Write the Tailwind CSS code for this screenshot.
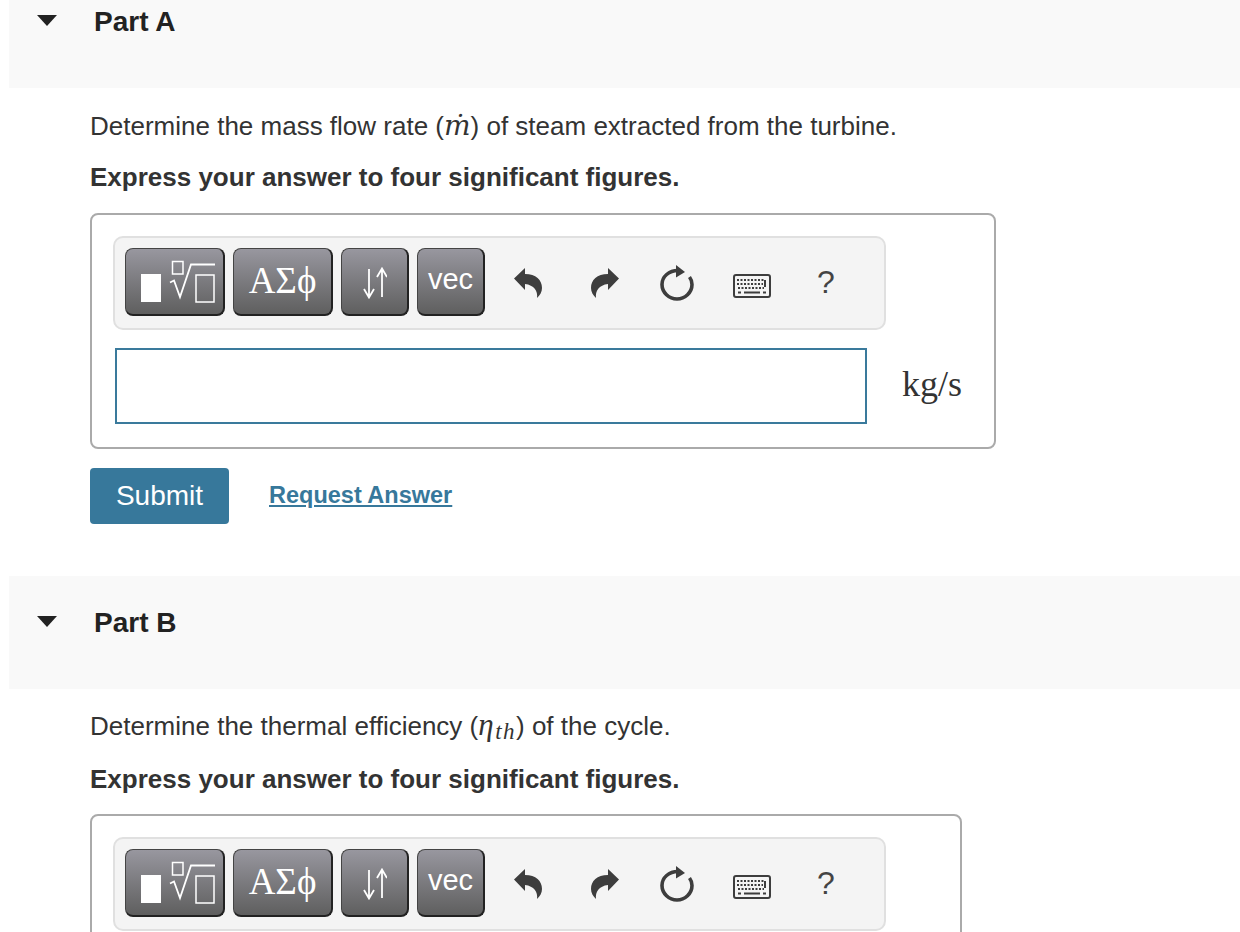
<!DOCTYPE html>
<html lang="en">
<head>
  <meta charset="UTF-8">
  <title>Part A and Part B</title>
  <script src="https://cdn.jsdelivr.net/npm/@tailwindcss/browser@4"></script>
</head>
<body class="bg-white text-[#333] font-['Liberation_Sans',Arial,sans-serif] h-[932px] overflow-hidden">
  <!-- shared icons -->
  <svg class="hidden">
    <symbol id="undo" viewBox="0 0 28 30">
      <path d="M0 10.500 L11 0 V6 C22 6 28 12 28 20 C28 24 26 27 23 30 C24 23 20 17 11 16 V22 Z" fill="#3d3d3d"/>
    </symbol>
    <symbol id="redo" viewBox="0 0 28 30">
      <path d="M28 10.500 L17 0 V6 C6 6 0 12 0 20 C0 24 2 27 5 30 C4 23 8 17 17 16 V22 Z" fill="#3d3d3d"/>
    </symbol>
    <symbol id="reload" viewBox="0 0 34 36">
      <path d="M18 5.500 C9 5.500 2 11.500 2 19.500 C2 27.500 9 34 17 34 C25 34 32 27.500 32 19.500 C32 16.500 31 14 29.500 12" fill="none" stroke="#3d3d3d" stroke-width="3.600"/>
      <path d="M16 0 L25 7 L16 12.500 Z" fill="#3d3d3d"/>
    </symbol>
    <symbol id="keyboard" viewBox="0 0 38 24">
      <rect x="1" y="1" width="36" height="22" rx="2" fill="#f4f4f4" stroke="#3d3d3d" stroke-width="2"/>
      <path d="M4 6 H32 M4 10 H30 M5 14 H31" stroke="#3d3d3d" stroke-width="2" stroke-dasharray="2 1.500"/>
      <path d="M32 6 V13" stroke="#3d3d3d" stroke-width="2"/>
      <path d="M5 18.500 H8 M11 18.500 H27 M30 18.500 H33" stroke="#3d3d3d" stroke-width="2"/>
    </symbol>
    <symbol id="template" viewBox="0 0 100 68">
      <rect x="16" y="26" width="20" height="28" fill="#fff"/>
      <rect x="47.500" y="13.500" width="10.500" height="12.500" fill="none" stroke="#fff" stroke-width="1.500"/>
      <path d="M45 34.500 L49 32.500 L55 49 L66 16.500 H90" fill="none" stroke="#fff" stroke-width="1.800"/>
      <rect x="71" y="27" width="18" height="27" fill="none" stroke="#fff" stroke-width="1.500"/>
    </symbol>
    <symbol id="arrows" viewBox="0 0 24 32">
      <path d="M6 2 V30 M1 22 L6 30.500 L11 22" fill="none" stroke="#fff" stroke-width="1.800"/>
      <path d="M19 30 V2 M14 10 L19 1.500 L24 10" fill="none" stroke="#fff" stroke-width="1.800"/>
    </symbol>
  </svg>

  <!-- Part A -->
  <section>
    <div class="ml-[9px] -mt-[25px] h-[113px] bg-[#f9f9f9] flex items-start pt-[29px]">
      <svg class="w-[20px] h-[11px] ml-[28px] mt-[11px]" viewBox="0 0 20 11"><path d="M0 0 H20 L10 11 Z" fill="#222"/></svg>
      <h2 class="ml-[37px] text-[28px] leading-[36px] font-bold text-[#222]">Part A</h2>
    </div>
    <div class="ml-[90px]">
      <p class="mt-[20px] text-[26px] leading-[36px]">Determine the mass flow rate (<span class="font-['DejaVu_Serif',serif] italic text-[28px] leading-none">ṁ</span>) of steam extracted from the turbine.</p>
      <p class="mt-[15px] text-[26px] leading-[36px] font-bold">Express your answer to four significant figures.</p>
      <div class="mt-[18px] w-[906px] h-[236px] border-2 border-[#aaa] rounded-lg pt-[21px] pl-[21px]">
        <div class="w-[773px] h-[94px] bg-[#f4f4f4] border-2 border-[#e0e0e0] rounded-[10px] flex items-center pl-[10px]">
          <div class="flex gap-2 -mt-[2px]">
            <button class="w-[100px] h-[68px] rounded-lg border border-[#444] border-b-2 border-r-2 border-b-[#222] border-r-[#222] bg-linear-to-b from-[#98979f] to-[#5f5f5f]"><svg class="w-[100px] h-[68px] -ml-px -mt-px"><use href="#template"/></svg></button>
            <button class="w-[100px] h-[68px] rounded-lg border border-[#444] border-b-2 border-r-2 border-b-[#222] border-r-[#222] bg-linear-to-b from-[#98979f] to-[#5f5f5f] text-white font-['Liberation_Serif',serif] text-[37px] pb-[2px]">ΑΣϕ</button>
            <button class="w-[68px] h-[68px] rounded-lg border border-[#444] border-b-2 border-r-2 border-b-[#222] border-r-[#222] bg-linear-to-b from-[#98979f] to-[#5f5f5f] flex items-center justify-center"><svg class="w-[24px] h-[32px] mt-[3px]"><use href="#arrows"/></svg></button>
            <button class="w-[68px] h-[68px] rounded-lg border border-[#444] border-b-2 border-r-2 border-b-[#222] border-r-[#222] bg-linear-to-b from-[#98979f] to-[#5f5f5f] text-white text-[29px] pb-[4px]">vec</button>
          </div>
          <svg class="w-[28px] h-[30px] ml-[29px]"><use href="#undo"/></svg>
          <svg class="w-[28px] h-[30px] ml-[49px]"><use href="#redo"/></svg>
          <svg class="w-[34px] h-[36px] ml-[41px]"><use href="#reload"/></svg>
          <svg class="w-[38px] h-[24px] ml-[39px] mt-[6px]"><use href="#keyboard"/></svg>
          <span class="ml-[46px] text-[32px] text-[#444] -mt-[2px]">?</span>
        </div>
        <div class="flex items-center mt-[18px] ml-[2px]">
          <div class="w-[752px] h-[76px] bg-white border-2 border-[#3a7a9c]"></div>
          <span class="ml-[35px] font-['Liberation_Serif',serif] text-[36px] leading-none -mt-[4px]">kg/s</span>
        </div>
      </div>
      <div class="flex items-center mt-[19px]">
        <button class="w-[139px] h-[56px] bg-[#37789b] rounded text-white text-[28px]">Submit</button>
        <a href="#" class="ml-[40px] text-[23.5px] font-bold text-[#37789b] underline">Request Answer</a>
      </div>
    </div>
  </section>

  <!-- Part B -->
  <section class="mt-[52px]">
    <div class="ml-[9px] h-[113px] bg-[#f9f9f9] flex items-start pt-[29px]">
      <svg class="w-[20px] h-[11px] ml-[28px] mt-[11px]" viewBox="0 0 20 11"><path d="M0 0 H20 L10 11 Z" fill="#222"/></svg>
      <h2 class="ml-[37px] text-[28px] leading-[36px] font-bold text-[#222]">Part B</h2>
    </div>
    <div class="ml-[90px]">
      <p class="mt-[19px] text-[26px] leading-[36px]">Determine the thermal efficiency (<span class="font-['Liberation_Serif',serif] italic text-[31px] leading-none tracking-[1.5px]">η<sub class="text-[23px] bottom-[-4px]">th</sub></span>) of the cycle.</p>
      <p class="mt-[17px] text-[26px] leading-[36px] font-bold">Express your answer to four significant figures.</p>
      <div class="mt-[17px] w-[872px] h-[236px] border-2 border-[#aaa] rounded-lg pt-[21px] pl-[21px]">
        <div class="w-[773px] h-[94px] bg-[#f4f4f4] border-2 border-[#e0e0e0] rounded-[10px] flex items-center pl-[10px]">
          <div class="flex gap-2 -mt-[2px]">
            <button class="w-[100px] h-[68px] rounded-lg border border-[#444] border-b-2 border-r-2 border-b-[#222] border-r-[#222] bg-linear-to-b from-[#98979f] to-[#5f5f5f]"><svg class="w-[100px] h-[68px] -ml-px -mt-px"><use href="#template"/></svg></button>
            <button class="w-[100px] h-[68px] rounded-lg border border-[#444] border-b-2 border-r-2 border-b-[#222] border-r-[#222] bg-linear-to-b from-[#98979f] to-[#5f5f5f] text-white font-['Liberation_Serif',serif] text-[37px] pb-[2px]">ΑΣϕ</button>
            <button class="w-[68px] h-[68px] rounded-lg border border-[#444] border-b-2 border-r-2 border-b-[#222] border-r-[#222] bg-linear-to-b from-[#98979f] to-[#5f5f5f] flex items-center justify-center"><svg class="w-[24px] h-[32px] mt-[3px]"><use href="#arrows"/></svg></button>
            <button class="w-[68px] h-[68px] rounded-lg border border-[#444] border-b-2 border-r-2 border-b-[#222] border-r-[#222] bg-linear-to-b from-[#98979f] to-[#5f5f5f] text-white text-[29px] pb-[4px]">vec</button>
          </div>
          <svg class="w-[28px] h-[30px] ml-[29px]"><use href="#undo"/></svg>
          <svg class="w-[28px] h-[30px] ml-[49px]"><use href="#redo"/></svg>
          <svg class="w-[34px] h-[36px] ml-[41px]"><use href="#reload"/></svg>
          <svg class="w-[38px] h-[24px] ml-[39px] mt-[6px]"><use href="#keyboard"/></svg>
          <span class="ml-[46px] text-[32px] text-[#444] -mt-[2px]">?</span>
        </div>
      </div>
    </div>
  </section>
</body>
</html>
